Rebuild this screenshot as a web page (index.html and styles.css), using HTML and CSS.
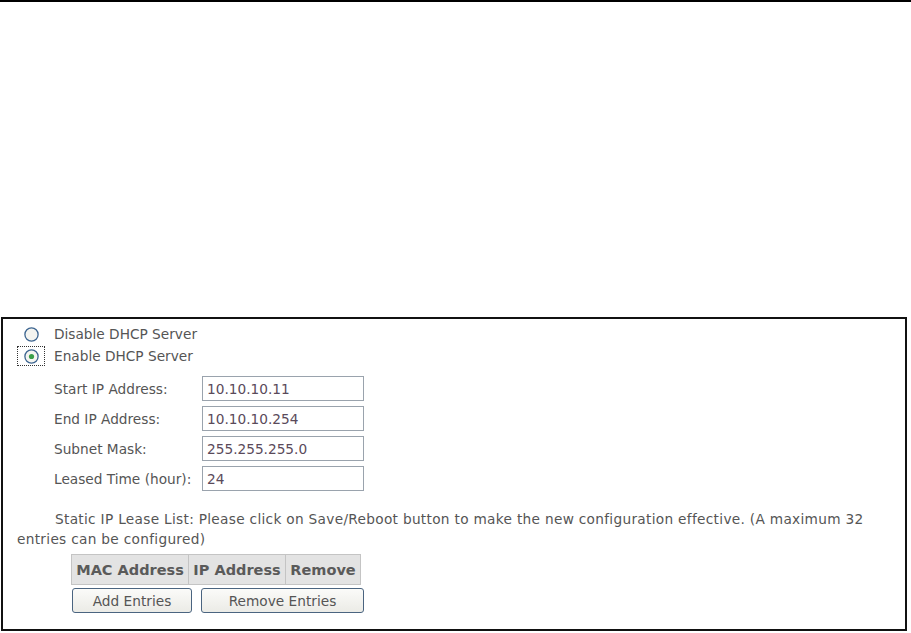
FILE: index.html
```html
<!DOCTYPE html>
<html lang="en">
<head>
  <meta charset="UTF-8">
  <title>DHCP Server</title>
  <link rel="stylesheet" href="styles.css">
</head>
<body>
  <div class="topline"></div>

  <div class="panel">
    <div class="radio-row">
      <span class="radio-box">
        <svg class="radio" viewBox="0 0 15 15" width="15" height="15">
          <circle cx="7.5" cy="7.5" r="6.6" fill="#f4f4f0" stroke="#3d6590" stroke-width="1.3"/>
        </svg>
      </span>
      <span class="radio-text">Disable DHCP Server</span>
    </div>
    <div class="radio-row">
      <span class="radio-box focused">
        <svg class="radio" viewBox="0 0 15 15" width="15" height="15">
          <circle cx="7.5" cy="7.5" r="6.6" fill="#f4f4f0" stroke="#3d6590" stroke-width="1.3"/>
          <circle cx="7.5" cy="7.5" r="2.6" fill="#3a9e48"/>
        </svg>
      </span>
      <span class="radio-text">Enable DHCP Server</span>
    </div>

    <div class="fields">
      <label class="field-label">Start IP Address:</label>
      <input class="field-input" type="text" value="10.10.10.11">
      <label class="field-label">End IP Address:</label>
      <input class="field-input" type="text" value="10.10.10.254">
      <label class="field-label">Subnet Mask:</label>
      <input class="field-input" type="text" value="255.255.255.0">
      <label class="field-label">Leased Time (hour):</label>
      <input class="field-input" type="text" value="24">
    </div>

    <p class="note">Static IP Lease List: Please click on Save/Reboot button to make the new configuration effective. (A maximum 32 entries can be configured)</p>

    <table class="lease-table">
      <tr>
        <th class="col-mac">MAC Address</th>
        <th class="col-ip">IP Address</th>
        <th class="col-remove">Remove</th>
      </tr>
    </table>

    <div class="buttons">
      <button class="btn btn-add">Add Entries</button>
      <button class="btn btn-remove">Remove Entries</button>
    </div>
  </div>
</body>
</html>
```

FILE: styles.css
```css
body {
  margin: 0;
  padding: 0;
  background: white;
  font-family: Tahoma, "DejaVu Sans", sans-serif;
  font-size: 13.7px;
  color: #555;
}

.topline {
  height: 2px;
  background: black;
}

/* bordered config panel */
.panel {
  box-sizing: border-box;
  width: 906px;
  margin: 315px 0 0 1px;
  border: 2px solid #111;
  padding: 4px 14px 16px 14px;
}

.radio-row {
  display: flex;
  align-items: center;
  height: 22px;
}

.radio-box {
  box-sizing: border-box;
  width: 28px;
  height: 20px;
  display: flex;
  align-items: center;
  justify-content: center;
  border: 1px dotted transparent;
}
.radio-box.focused {
  border-color: #333;
}

.radio-text {
  margin-left: 9px;
}

.fields {
  display: grid;
  grid-template-columns: 148px 162px;
  row-gap: 5px;
  margin: 9px 0 0 37px;
}

.field-label {
  display: flex;
  align-items: center;
  height: 25px;
  white-space: nowrap;
}

.field-input {
  box-sizing: border-box;
  width: 162px;
  height: 25px;
  margin: 0;
  padding: 0 4px;
  border: 1px solid #9aa3ad;
  font-family: inherit;
  font-size: 13.7px;
  color: #5a4a5a;
  outline: none;
}

.note {
  margin: 18px 0 0 0;
  text-indent: 38px;
  line-height: 20px;
  letter-spacing: 0.3px;
}

.lease-table {
  margin: 5px 0 0 54px;
  border-collapse: collapse;
  background: #e3e3e3;
  border: 1px solid #c8c8c8;
}
.lease-table th {
  height: 29px;
  padding: 0 3px;
  border: 1px solid #c4c4c4;
  font-size: 14.5px;
  color: #5a5a5a;
  text-align: center;
  white-space: nowrap;
}
.col-mac { width: 110px; }
.col-ip { width: 90px; }
.col-remove { width: 68px; }

.buttons {
  display: flex;
  gap: 9px;
  margin: 3px 0 0 55px;
}

.btn {
  box-sizing: border-box;
  height: 25px;
  padding: 0;
  border: 1px solid #4a6480;
  border-radius: 3px;
  background: linear-gradient(#fbfbf9, #ebebe6);
  font-family: inherit;
  font-size: 13.7px;
  color: #555;
}
.btn-add { width: 120px; }
.btn-remove { width: 163px; }
```
